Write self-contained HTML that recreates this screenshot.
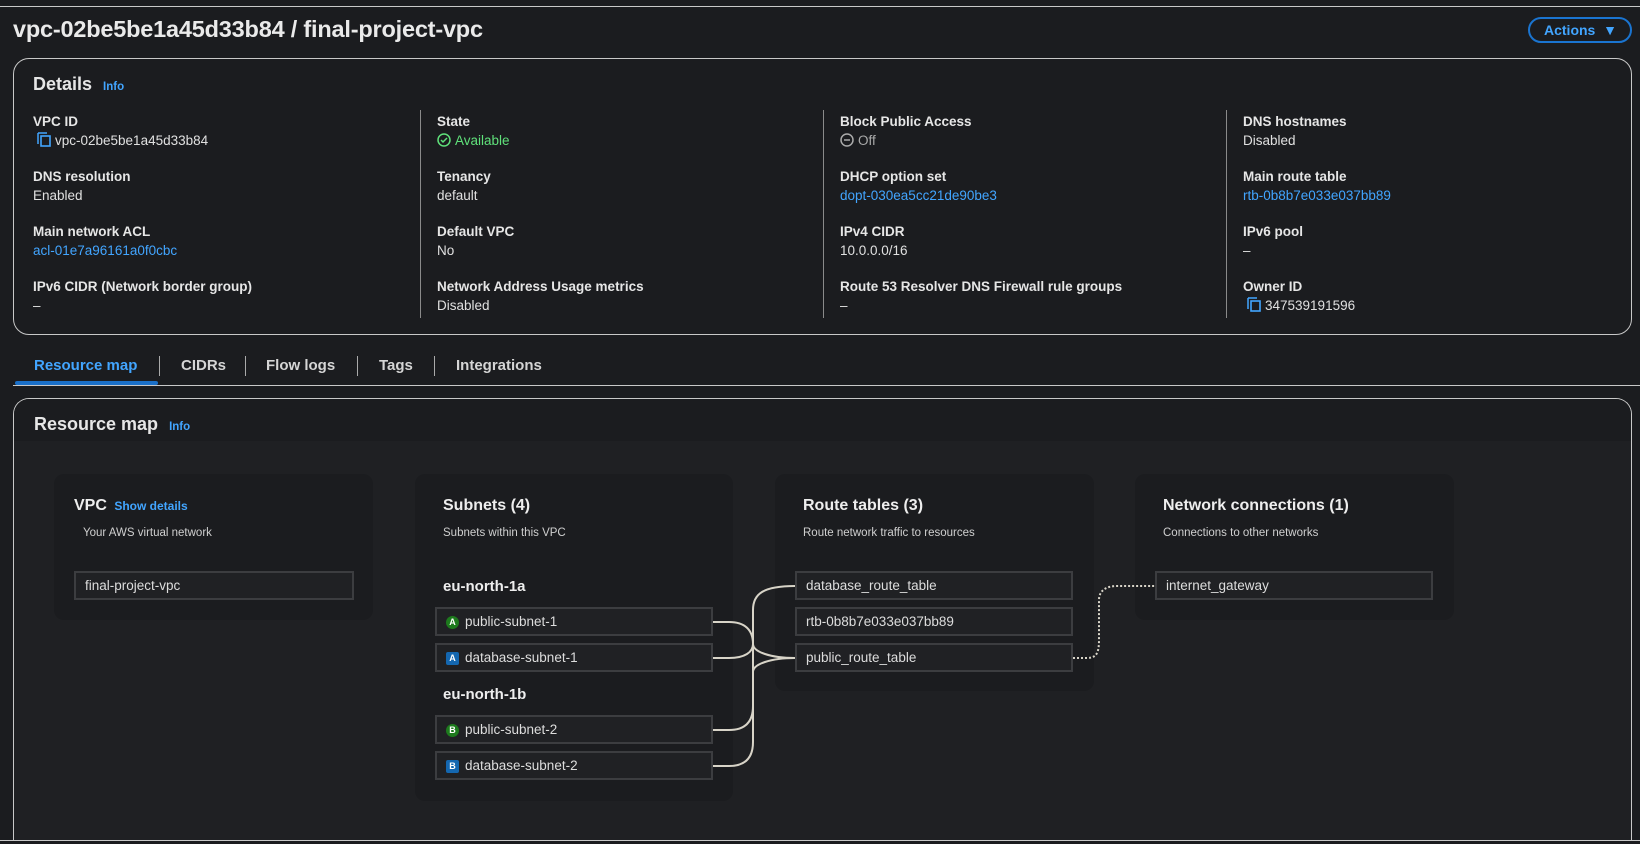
<!DOCTYPE html>
<html style="overflow:hidden;height:844px"><head><meta charset="utf-8"><style>
*{box-sizing:border-box;margin:0;padding:0}
body{width:1640px;height:844px;background:#1b1c1f;color:#e0e0e0;font-family:"Liberation Sans",sans-serif;font-size:13.5px;position:relative;overflow:hidden}
.a{position:absolute;white-space:nowrap}
.topline{left:0;top:6px;width:1640px;height:1px;background:#c8c8c8}
h1{position:absolute;left:13px;top:16px;font-size:23.5px;font-weight:bold;color:#eaeaea;letter-spacing:-0.2px}
.btn{left:1528px;top:17px;width:104px;height:26px;border:2px solid #1a74d0;border-radius:14px;color:#42a5ff;font-weight:bold;font-size:14px;padding:3px 0 0 14px}
.box{border:1px solid #c8c8c8;border-radius:16px}
.lbl{font-weight:bold;color:#e6e6e6;font-size:13.5px}
.val{color:#e0e0e0;font-size:13.5px}
.lnk{color:#42a5ff}
.info{color:#42a5ff;font-weight:bold;font-size:11.5px}
.div{width:1px;background:#8a8a8a;top:110px;height:208px}
.tab{top:357px;font-weight:bold;font-size:15px;color:#d5d5d5}
.sep{top:356px;width:1px;height:20px;background:#aaa}
.card{background:#1b1c1f;border-radius:10px}
.ct{font-weight:bold;font-size:16px;color:#eee}
.cs{font-size:11.5px;color:#cfcfcf}
.it{background:#202124;border:2px solid #3c3d40;height:29px;font-size:13.5px;color:#ddd;padding:5px 0 0 9px}
.bd{display:inline-block;width:13px;height:13px;font-size:9px;font-weight:bold;text-align:center;line-height:13px;vertical-align:1px;margin-right:6px;color:#fff}
.g{background:#1d7a1d;border-radius:50%}
.b{background:#1467b0;border-radius:2px}
.az{font-weight:bold;font-size:15px;color:#eee}
</style></head><body>
<div class="a topline"></div>
<h1>vpc-02be5be1a45d33b84 / final-project-vpc</h1>
<div class="a btn">Actions&nbsp;&nbsp;▼</div>

<div class="a box" style="left:13px;top:58px;width:1619px;height:277px"></div>
<div class="a" style="left:33px;top:74px;font-size:18px;font-weight:bold;color:#e6e6e6">Details <span class="info" style="margin-left:6px">Info</span></div>
<div class="a div" style="left:420px"></div><div class="a div" style="left:823px"></div><div class="a div" style="left:1226px"></div>

<div class="a" style="left:33px;top:112px;line-height:19px">
<div class="lbl">VPC ID</div><div class="val"><svg width="16" height="16" viewBox="0 0 16 16" style="vertical-align:-3px;margin:0 3px 0 3px"><path d="M2 1v11M2 1h9" stroke="#42a5ff" stroke-width="1.5" fill="none"/><rect x="5" y="4" width="9" height="10" stroke="#42a5ff" stroke-width="1.6" fill="none"/></svg>vpc-02be5be1a45d33b84</div>
<div class="lbl" style="margin-top:17px">DNS resolution</div><div class="val">Enabled</div>
<div class="lbl" style="margin-top:17px">Main network ACL</div><div class="val lnk">acl-01e7a96161a0f0cbc</div>
<div class="lbl" style="margin-top:17px">IPv6 CIDR (Network border group)</div><div class="val">–</div>
</div>
<div class="a" style="left:437px;top:112px;line-height:19px">
<div class="lbl">State</div><div class="val" style="color:#5fe07a"><svg width="14" height="14" viewBox="0 0 14 14" style="vertical-align:-2px;margin-right:4px"><circle cx="7" cy="7" r="6" stroke="#5fe07a" stroke-width="1.5" fill="none"/><path d="M4 7l2 2 4-4" stroke="#5fe07a" stroke-width="1.5" fill="none"/></svg>Available</div>
<div class="lbl" style="margin-top:17px">Tenancy</div><div class="val">default</div>
<div class="lbl" style="margin-top:17px">Default VPC</div><div class="val">No</div>
<div class="lbl" style="margin-top:17px">Network Address Usage metrics</div><div class="val">Disabled</div>
</div>
<div class="a" style="left:840px;top:112px;line-height:19px">
<div class="lbl">Block Public Access</div><div class="val" style="color:#aaa"><svg width="14" height="14" viewBox="0 0 14 14" style="vertical-align:-2px;margin-right:4px"><circle cx="7" cy="7" r="6" stroke="#aaa" stroke-width="1.5" fill="none"/><path d="M4 7h6" stroke="#aaa" stroke-width="1.5"/></svg>Off</div>
<div class="lbl" style="margin-top:17px">DHCP option set</div><div class="val lnk">dopt-030ea5cc21de90be3</div>
<div class="lbl" style="margin-top:17px">IPv4 CIDR</div><div class="val">10.0.0.0/16</div>
<div class="lbl" style="margin-top:17px">Route 53 Resolver DNS Firewall rule groups</div><div class="val">–</div>
</div>
<div class="a" style="left:1243px;top:112px;line-height:19px">
<div class="lbl">DNS hostnames</div><div class="val">Disabled</div>
<div class="lbl" style="margin-top:17px">Main route table</div><div class="val lnk">rtb-0b8b7e033e037bb89</div>
<div class="lbl" style="margin-top:17px">IPv6 pool</div><div class="val">–</div>
<div class="lbl" style="margin-top:17px">Owner ID</div><div class="val"><svg width="16" height="16" viewBox="0 0 16 16" style="vertical-align:-3px;margin:0 3px 0 3px"><path d="M2 1v11M2 1h9" stroke="#42a5ff" stroke-width="1.5" fill="none"/><rect x="5" y="4" width="9" height="10" stroke="#42a5ff" stroke-width="1.6" fill="none"/></svg>347539191596</div>
</div>

<div class="a tab" style="left:34px;color:#42a5ff">Resource map</div>
<div class="a" style="left:15px;top:381px;width:143px;height:4px;background:#1a6fc8;border-radius:2px"></div>
<div class="a sep" style="left:159px"></div>
<div class="a tab" style="left:181px">CIDRs</div>
<div class="a sep" style="left:245px"></div>
<div class="a tab" style="left:266px">Flow logs</div>
<div class="a sep" style="left:357px"></div>
<div class="a tab" style="left:379px">Tags</div>
<div class="a sep" style="left:434px"></div>
<div class="a tab" style="left:456px">Integrations</div>
<div class="a" style="left:13px;top:385px;width:1627px;height:1px;background:#c8c8c8"></div>

<div class="a box" style="left:13px;top:398px;width:1619px;height:442px;background:#1f2023;overflow:hidden;border-bottom:none;border-radius:16px 16px 0 0"><div style="height:42px;background:#1b1c1f"></div></div>
<div class="a" style="left:34px;top:414px;font-size:18px;font-weight:bold;color:#e6e6e6">Resource map <span class="info" style="margin-left:6px">Info</span></div>

<div class="a card" style="left:54px;top:474px;width:319px;height:146px"></div>
<div class="a ct" style="left:74px;top:497px">VPC <span class="info" style="font-size:12px;margin-left:3px">Show details</span></div>
<div class="a cs" style="left:83px;top:527px">Your AWS virtual network</div>
<div class="a it" style="left:74px;top:571px;width:280px">final-project-vpc</div>

<div class="a card" style="left:415px;top:474px;width:318px;height:327px"></div>
<div class="a ct" style="left:443px;top:497px">Subnets (4)</div>
<div class="a cs" style="left:443px;top:527px">Subnets within this VPC</div>
<div class="a az" style="left:443px;top:578px">eu-north-1a</div>
<div class="a it" style="left:435px;top:607px;width:278px"><span class="bd g">A</span>public-subnet-1</div>
<div class="a it" style="left:435px;top:643px;width:278px"><span class="bd b">A</span>database-subnet-1</div>
<div class="a az" style="left:443px;top:686px">eu-north-1b</div>
<div class="a it" style="left:435px;top:715px;width:278px"><span class="bd g">B</span>public-subnet-2</div>
<div class="a it" style="left:435px;top:751px;width:278px"><span class="bd b">B</span>database-subnet-2</div>

<div class="a card" style="left:775px;top:474px;width:319px;height:217px"></div>
<div class="a ct" style="left:803px;top:497px">Route tables (3)</div>
<div class="a cs" style="left:803px;top:527px">Route network traffic to resources</div>
<div class="a it" style="left:795px;top:571px;width:278px">database_route_table</div>
<div class="a it" style="left:795px;top:607px;width:278px">rtb-0b8b7e033e037bb89</div>
<div class="a it" style="left:795px;top:643px;width:278px">public_route_table</div>

<div class="a card" style="left:1135px;top:474px;width:319px;height:146px"></div>
<div class="a ct" style="left:1163px;top:497px">Network connections (1)</div>
<div class="a cs" style="left:1163px;top:527px">Connections to other networks</div>
<div class="a it" style="left:1155px;top:571px;width:278px">internet_gateway</div>

<svg class="a" style="left:0;top:0" width="1640" height="844">
<g stroke="#d8d4c8" stroke-width="2" fill="none">
<path d="M713 622h16c16 0 24 8 24 22"/>
<path d="M713 658h16c16 0 24-6 24-14"/>
<path d="M713 730h16c16 0 24-8 24-24"/>
<path d="M713 766h16c16 0 24-8 24-24V610c0-16 10-24 42-24"/>
<path d="M753 644c0 8 18 14 42 14"/>
<path d="M753 672c0-8 18-14 42-14"/>
</g>
<path d="M1073 658h14c10 0 12-6 12-18v-40c0-10 8-14 18-14h38" stroke="#d8d4c8" stroke-width="2" stroke-dasharray="2 2" fill="none"/>
</svg>
<div class="a" style="left:0;top:840px;width:1640px;height:1px;background:#c8c8c8"></div>
</body></html>
